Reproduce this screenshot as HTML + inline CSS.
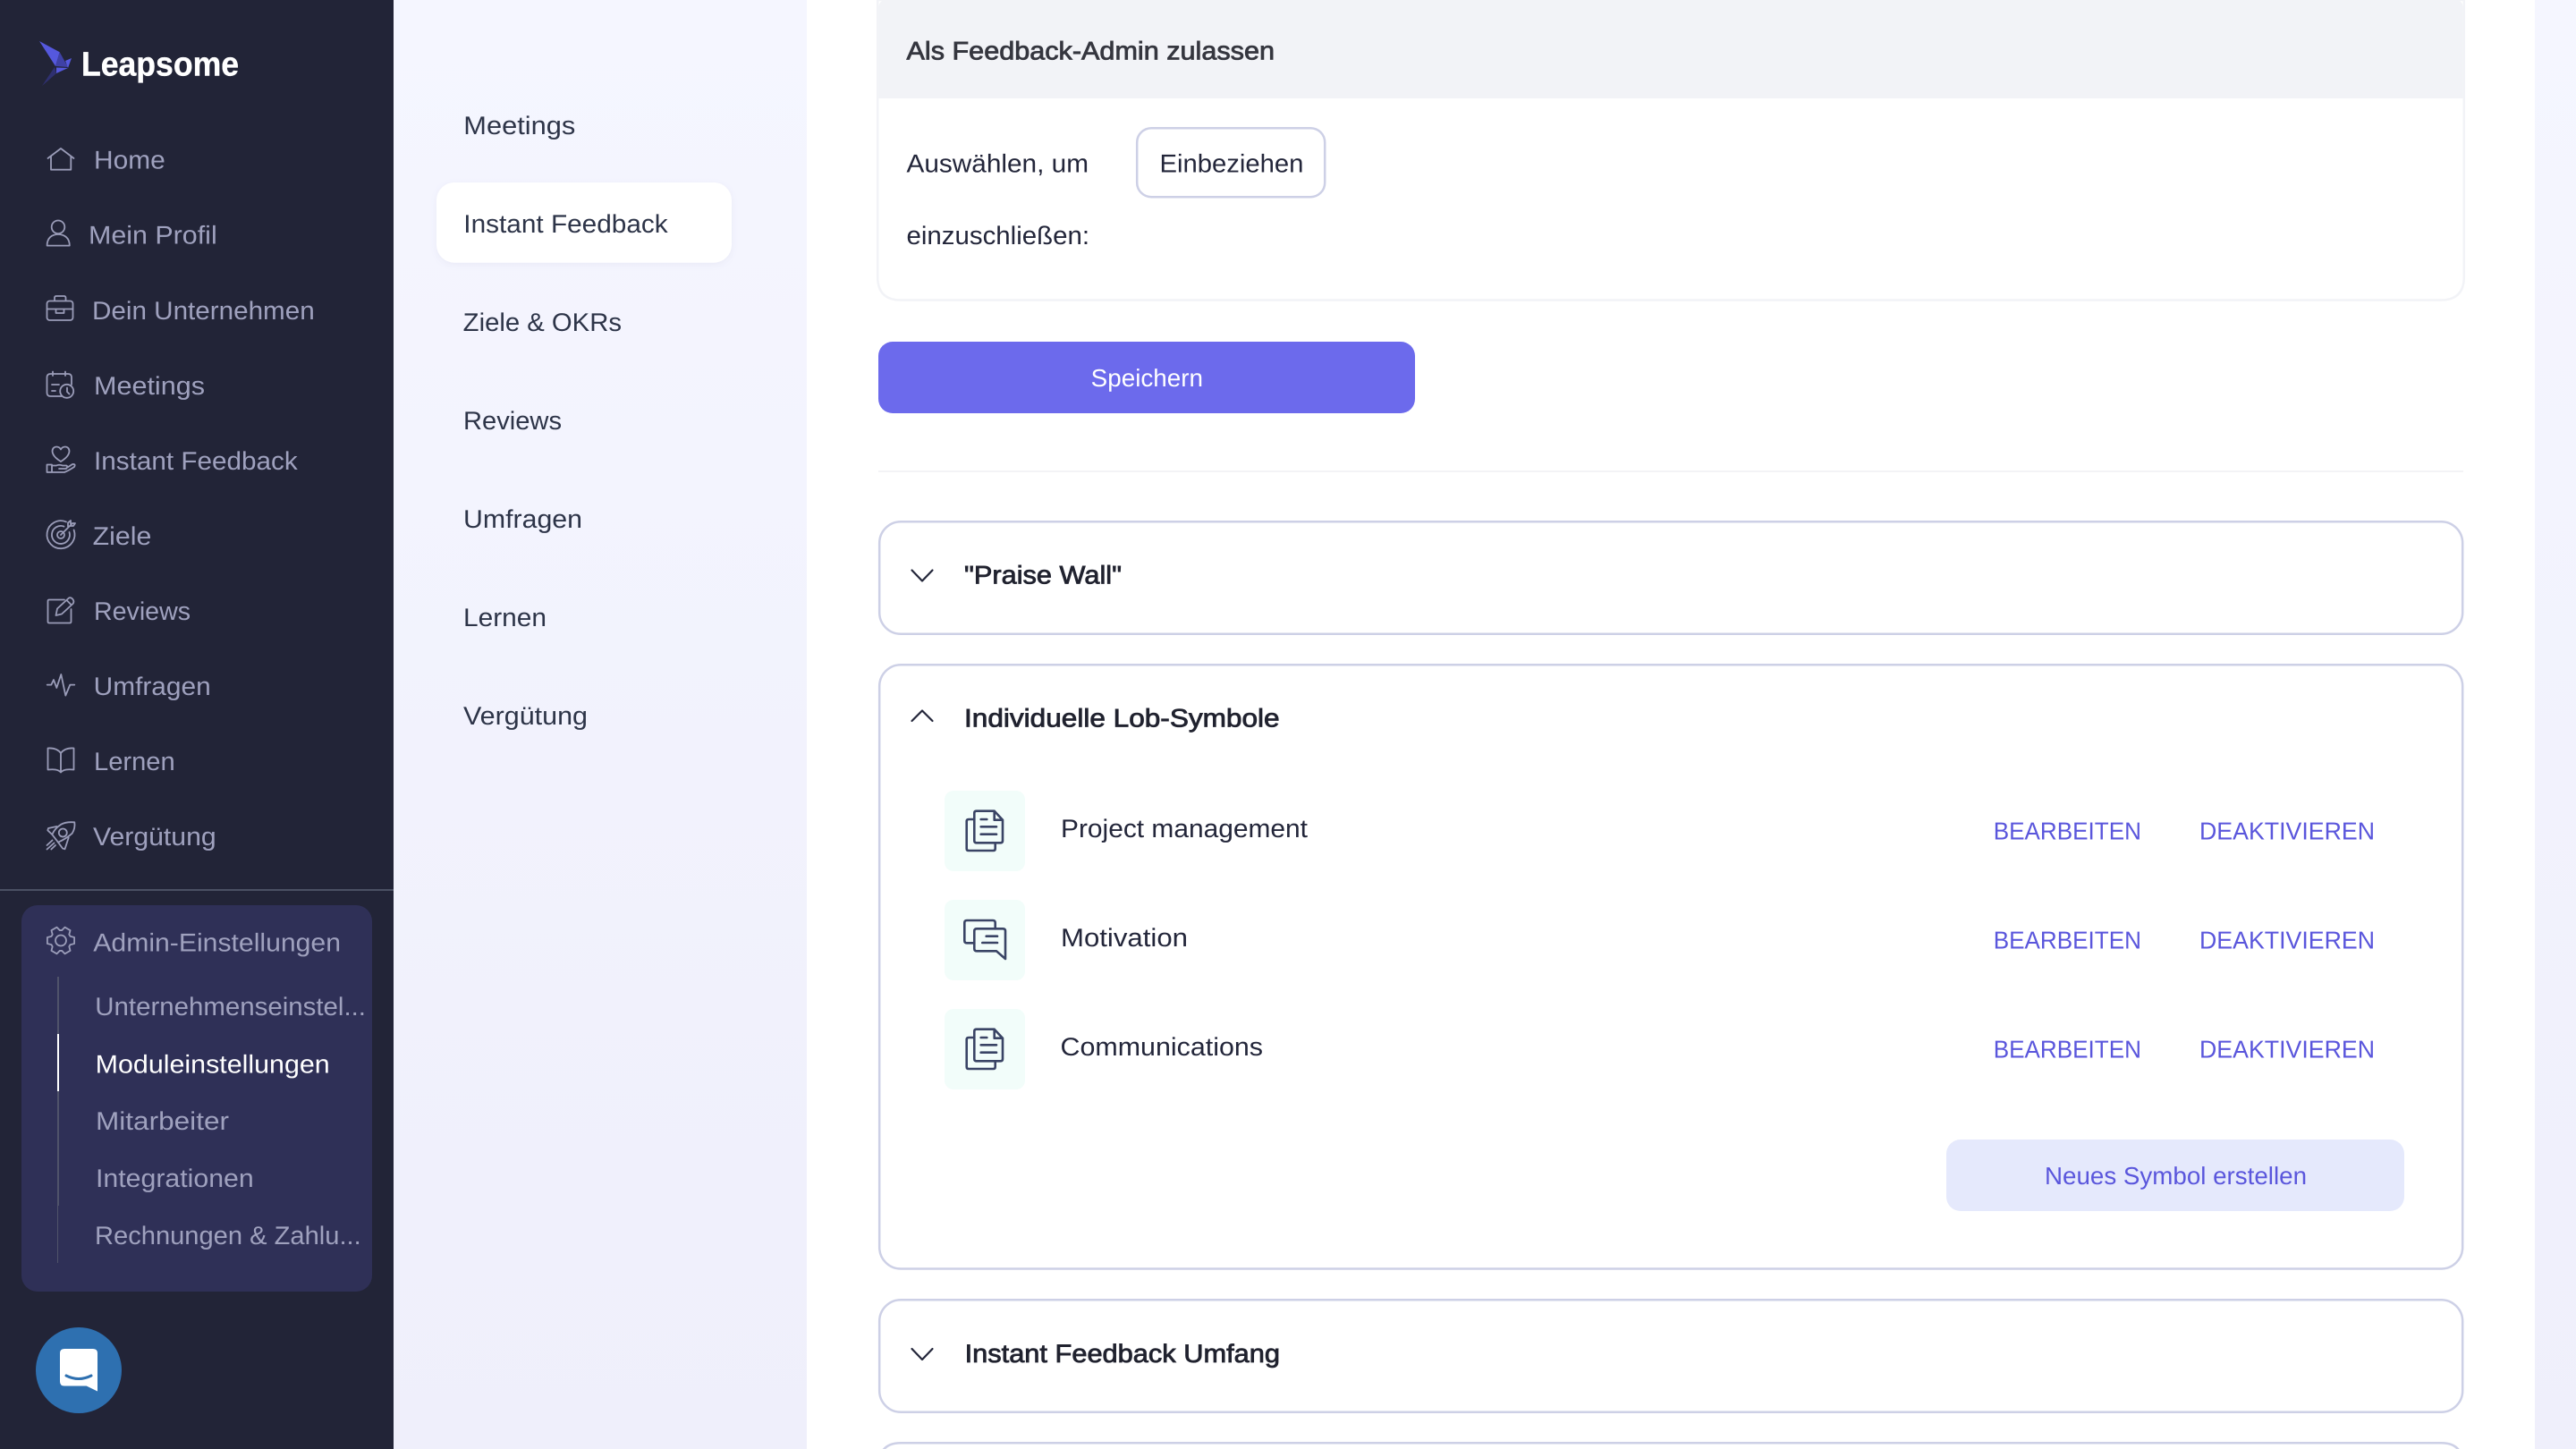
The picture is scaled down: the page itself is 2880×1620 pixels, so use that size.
<!DOCTYPE html>
<html lang="de">
<head>
<meta charset="utf-8">
<title>Leapsome</title>
<style>
html,body{margin:0;padding:0;width:2880px;height:1620px;overflow:hidden;background:#fff}
svg{display:block}
text{font-family:"Liberation Sans",Arial,sans-serif;text-rendering:geometricPrecision;transform:translateX(-1px)}
.n{font-size:28.5px;fill:#9fa1be}
.s{font-size:28.5px;fill:#2d3448}
.t{font-size:28.5px;fill:#20222f;stroke:#20222f;stroke-width:.8px}
.b{font-size:28.5px;fill:#23263a}
.a{font-size:27.5px;fill:#5a56dc}
.i{fill:none;stroke:#9a9cb8;stroke-width:1.8;stroke-linecap:round;stroke-linejoin:round}
.d{fill:none;stroke:#3a4465;stroke-width:2.6;stroke-linecap:round;stroke-linejoin:round}
.c{fill:none;stroke:#23263a;stroke-width:2.2;stroke-linecap:round;stroke-linejoin:round}
</style>
</head>
<body>
<svg xmlns="http://www.w3.org/2000/svg" width="2880" height="1620" viewBox="0 0 2880 1620">
<defs>
<linearGradient id="bg" x1="0" y1="0" x2="0" y2="1">
<stop offset="0" stop-color="#f5f6ff"/>
<stop offset="1" stop-color="#efeffb"/>
</linearGradient>
</defs>

<!-- backgrounds -->
<rect x="0" y="0" width="2880" height="1620" fill="#fff"/>
<rect x="440" y="0" width="462" height="1620" fill="url(#bg)"/>
<rect x="2834" y="0" width="46" height="1620" fill="url(#bg)"/>
<rect x="0" y="0" width="440" height="1620" fill="#222437"/>

<!-- logo -->
<polygon points="44,46 66.7,58.3 62,74" fill="#5558dd"/>
<polygon points="66.7,58.3 76,75 62,74" fill="#3f41a6"/>
<polygon points="73,68 80,65 76,76" fill="#5558dd"/>
<polygon points="63,75.5 76,76 63,82" fill="#5558dd"/>
<polygon points="61,75 63,82 47,96" fill="#2f3070"/>
<text x="92" y="84.3" font-size="38" font-weight="700" fill="#fff" stroke="#fff" stroke-width=".4" textLength="176" lengthAdjust="spacingAndGlyphs">Leapsome</text>

<!-- sidebar nav -->
<text class="n" x="106" y="188.7" textLength="79.7" lengthAdjust="spacingAndGlyphs">Home</text>
<text class="n" x="100" y="272.7" textLength="143.7" lengthAdjust="spacingAndGlyphs">Mein Profil</text>
<text class="n" x="104" y="356.8" textLength="248.7" lengthAdjust="spacingAndGlyphs">Dein Unternehmen</text>
<text class="n" x="106" y="440.8" textLength="124" lengthAdjust="spacingAndGlyphs">Meetings</text>
<text class="n" x="106" y="524.8" textLength="227.7" lengthAdjust="spacingAndGlyphs">Instant Feedback</text>
<text class="n" x="104.7" y="608.9" textLength="65.6" lengthAdjust="spacingAndGlyphs">Ziele</text>
<text class="n" x="106" y="692.9" textLength="108" lengthAdjust="spacingAndGlyphs">Reviews</text>
<text class="n" x="105.7" y="777" textLength="131" lengthAdjust="spacingAndGlyphs">Umfragen</text>
<text class="n" x="106" y="861" textLength="90.7" lengthAdjust="spacingAndGlyphs">Lernen</text>
<text class="n" x="105" y="945" textLength="137.7" lengthAdjust="spacingAndGlyphs">Vergütung</text>

<!-- sidebar icons -->
<g class="i">
<path d="M53.5,177 L68,166 L82.5,177 M57,175 V189.7 H79.3 V175"/>
<circle cx="65" cy="253.8" r="7.3"/>
<path d="M52.6,274.6 C52.6,266 58,262 65,262 C72,262 77.8,266 77.8,274.6 Z"/>
<rect x="52.5" y="336.5" width="29" height="21.5" rx="3"/>
<path d="M61,336 V333 Q61,331 63,331 H71.5 Q73.5,331 73.5,333 V336 M52.5,345.5 H62.5 M71.5,345.5 H81.5 M62.5,345.5 H71.5 V350 H62.5 Z"/>
<path d="M69,443 H56.5 Q52.5,443 52.5,439 V422 Q52.5,418 56.5,418 H76 Q80,418 80,422 V430 M59,415.5 V420 M73,415.5 V420 M58,430 H66 M58,437 H62"/>
<circle cx="74.7" cy="437.3" r="7.5"/>
<path d="M75,433.5 V438 L77.5,440.5"/>
<path d="M68,516 C60,511 58.5,507 58.5,504.5 C58.5,501 61,499.5 63,499.5 C65.5,499.5 67,500.5 68,502.5 C69,500.5 70.5,499.5 73,499.5 C75,499.5 77.5,501 77.5,504.5 C77.5,507 76,511 68,516 Z"/>
<path d="M52.5,519.5 H58 V528 H52.5 Z M58,520.5 H63 Q66,519 70,520.5 H74 Q76.5,521.5 74,524 H66 M74,523.5 L81,519 Q85,518.5 83,522 Q77,526 72,528 H58"/>
<path d="M74,583.4 A15.5,15.5 0 1 0 82.6,592.5"/>
<path d="M71.5,588.6 A10,10 0 1 0 77.5,595"/>
<circle cx="68" cy="598" r="4"/>
<path d="M68,598 L81,585 M76,588.5 V584.5 L79,582 V585.5 M78.5,588 H82 L84,585 H81"/>
<path d="M72,670.5 H55 Q53.5,670.5 53.5,672 V695 Q53.5,696.5 55,696.5 H78 Q79.5,696.5 79.5,695 V681"/>
<path d="M62.5,688 L64,680.5 L77,668.5 Q79,667.5 81,669.5 L82,671 Q83,673 81.5,675 L69,686.5 Z M74.5,671 L79.5,676"/>
<path d="M52.7,765.6 H57.3 L60,760 L63.3,769 L68.3,754 L73.3,777.6 L78.3,765.6 H83.3"/>
<path d="M68,842 C65,838 60,836 53.5,836.5 V860.5 C60,860 65,860 68,863.5 C71,860 76,860 82.5,860.5 V836.5 C76,836 71,838 68,842 V863.5"/>
<path d="M83.3,919.3 C76,918.8 72,919.5 68.3,921.7 C63,925 60,929 58.3,933 L65,941.7 C71,939 76,936 80.7,931.7 C83,928 84,924 83.3,919.3 Z"/>
<path d="M63.3,924 L54,926 L53.3,928.3 L58.3,933 M76.7,936.5 L72.5,949.3 L70,948.5 L65,941.7"/>
<circle cx="70.3" cy="931" r="4.5"/>
<path d="M52.5,945 L58.5,939.5 M52.5,949.5 L60.5,942.5 M57.3,949.5 L62,945"/>
</g>

<!-- sidebar divider and admin panel -->
<rect x="0" y="994" width="440" height="2" fill="#4b5063"/>
<rect x="24" y="1012" width="392" height="432" rx="18" fill="#2f3057"/>
<g class="i" transform="translate(68,1051.5)"><path d="M10.5,-4.7 L15.1,-3.5 L15.1,3.5 L10.5,4.7 L9.3,6.76 L10.57,11.34 L4.53,14.82 L1.2,11.44 L-1.2,11.44 L-4.53,14.82 L-10.57,11.34 L-9.3,6.76 L-10.5,4.68 L-15.1,3.49 L-15.1,-3.49 L-10.5,-4.68 L-9.3,-6.76 L-10.57,-11.34 L-4.53,-14.82 L-1.2,-11.44 L1.2,-11.44 L4.53,-14.82 L10.57,-11.34 L9.3,-6.76 Z"/><circle cx="0" cy="0" r="6"/></g>
<text class="n" x="105.3" y="1063.7" textLength="276.7" lengthAdjust="spacingAndGlyphs">Admin-Einstellungen</text>
<text class="n" x="107.3" y="1135" textLength="302.7" lengthAdjust="spacingAndGlyphs">Unternehmenseinstel...</text>
<text x="107.7" y="1199.6" font-size="28.5" fill="#fff" textLength="262" lengthAdjust="spacingAndGlyphs">Moduleinstellungen</text>
<text class="n" x="108" y="1263" textLength="149" lengthAdjust="spacingAndGlyphs">Mitarbeiter</text>
<text class="n" x="108" y="1327" textLength="176.7" lengthAdjust="spacingAndGlyphs">Integrationen</text>
<text class="n" x="107" y="1391" textLength="297.7" lengthAdjust="spacingAndGlyphs">Rechnungen &amp; Zahlu...</text>
<rect x="64" y="1092" width="2" height="64" fill="#50536a"/>
<rect x="64" y="1156" width="2" height="64" fill="#fff"/>
<rect x="64" y="1220" width="2" height="128" fill="#50536a"/>
<rect x="64" y="1348" width="1" height="64" fill="#50536a"/>

<!-- chat bubble -->
<circle cx="88" cy="1532" r="48" fill="#2e70b0"/>
<path d="M72,1508 H104 Q109,1508 109,1513 V1555.5 L96.7,1549.5 H72 Q67,1549.5 67,1544.5 V1513 Q67,1508 72,1508 Z" fill="#fff"/>
<path d="M74,1538 Q88,1545 102,1538" fill="none" stroke="#2e70b0" stroke-width="3" stroke-linecap="round"/>

<!-- sub nav -->
<text class="s" x="519.3" y="150" textLength="125" lengthAdjust="spacingAndGlyphs">Meetings</text>
<rect x="488" y="204" width="330" height="89.7" rx="20" fill="#fff" style="filter:drop-shadow(0 2px 4px rgba(40,40,100,.05))"/>
<text class="s" x="519.3" y="260" textLength="228.4" lengthAdjust="spacingAndGlyphs">Instant Feedback</text>
<text class="s" x="518.7" y="370" textLength="177.3" lengthAdjust="spacingAndGlyphs">Ziele &amp; OKRs</text>
<text class="s" x="519" y="480" textLength="110" lengthAdjust="spacingAndGlyphs">Reviews</text>
<text class="s" x="519" y="590" textLength="133" lengthAdjust="spacingAndGlyphs">Umfragen</text>
<text class="s" x="519" y="700" textLength="93" lengthAdjust="spacingAndGlyphs">Lernen</text>
<text class="s" x="519" y="810" textLength="139" lengthAdjust="spacingAndGlyphs">Vergütung</text>

<!-- card: Als Feedback-Admin -->
<path d="M981.2,0 V309.5 Q981.2,335.5 1007.2,335.5 H2728.8 Q2754.8,335.5 2754.8,309.5 V0 Z" fill="#fff" stroke="#f2f3f7" stroke-width="2.5"/>
<path d="M982.5,110 V8 Q982.5,0 992,0 H2744 Q2753.5,0 2753.5,8 V110 Z" fill="#f2f3f7"/>
<text class="t" x="1014.5" y="66.7" style="fill:#35363f;stroke:#35363f" textLength="411.5" lengthAdjust="spacingAndGlyphs">Als Feedback-Admin zulassen</text>
<text class="b" x="1014.5" y="192.7" textLength="203.5" lengthAdjust="spacingAndGlyphs">Auswählen, um</text>
<text class="b" x="1014.5" y="273" textLength="204.5" lengthAdjust="spacingAndGlyphs">einzuschließen:</text>
<rect x="1271.2" y="143.2" width="210" height="77" rx="16" fill="#fff" stroke="#cdd0e6" stroke-width="2.5"/>
<text class="b" x="1297.5" y="192.7" textLength="160.9" lengthAdjust="spacingAndGlyphs">Einbeziehen</text>

<!-- save -->
<rect x="982" y="382" width="600" height="80" rx="16" fill="#6c6aec"/>
<text x="1220.7" y="432" font-size="27.5" fill="#fff" textLength="125.3" lengthAdjust="spacingAndGlyphs">Speichern</text>
<rect x="982" y="526" width="1772" height="2" fill="#f3f3f6"/>

<!-- card: Praise Wall -->
<rect x="983.2" y="583.2" width="1770" height="125.6" rx="24" fill="#fff" stroke="#cdd0e6" stroke-width="2.5"/>
<path class="c" d="M1019.5,637.5 L1031,649.5 L1042.5,637.5"/>
<text class="t" x="1079" y="652.7" textLength="176" lengthAdjust="spacingAndGlyphs">"Praise Wall"</text>

<!-- card: Individuelle Lob-Symbole -->
<rect x="983.2" y="743.2" width="1770" height="675.3" rx="24" fill="#fff" stroke="#cdd0e6" stroke-width="2.5"/>
<path class="c" d="M1019.5,806 L1031,794.5 L1042.5,806"/>
<text class="t" x="1079" y="812.7" textLength="352.6" lengthAdjust="spacingAndGlyphs">Individuelle Lob-Symbole</text>

<rect x="1056" y="884" width="90" height="90" rx="10" fill="#f2fdfa"/>
<rect x="1056" y="1006" width="90" height="90" rx="10" fill="#f2fdfa"/>
<rect x="1056" y="1128" width="90" height="90" rx="10" fill="#f2fdfa"/>

<g class="d">
<path d="M1089.3,916 H1083 Q1080.7,916 1080.7,918.3 V948.7 Q1080.7,951 1083,951 H1110.4 Q1112.7,951 1112.7,948.7 V942.3"/>
<path d="M1111.7,906.7 H1091.6 Q1089.3,906.7 1089.3,909 V940 Q1089.3,942.3 1091.6,942.3 H1118.7 Q1121,942.3 1121,940 V916.7 Z M1111.7,906.7 V916.7 H1121"/>
<path d="M1096.7,916 H1103.3 M1096.7,924.3 H1114 M1096.7,932.7 H1114"/>
</g>
<g class="d" transform="translate(0,244)">
<path d="M1089.3,916 H1083 Q1080.7,916 1080.7,918.3 V948.7 Q1080.7,951 1083,951 H1110.4 Q1112.7,951 1112.7,948.7 V942.3"/>
<path d="M1111.7,906.7 H1091.6 Q1089.3,906.7 1089.3,909 V940 Q1089.3,942.3 1091.6,942.3 H1118.7 Q1121,942.3 1121,940 V916.7 Z M1111.7,906.7 V916.7 H1121"/>
<path d="M1096.7,916 H1103.3 M1096.7,924.3 H1114 M1096.7,932.7 H1114"/>
</g>
<g class="d">
<path d="M1089.3,1054.3 H1081 Q1078.3,1054.3 1078.3,1051.6 V1031.7 Q1078.3,1029 1081,1029 H1110 Q1112.7,1029 1112.7,1031.7 V1038.3"/>
<path d="M1092,1038.3 H1121.3 Q1124,1038.3 1124,1041 V1072 L1114,1063.3 H1092 Q1089.3,1063.3 1089.3,1060.6 V1041 Q1089.3,1038.3 1092,1038.3 Z"/>
<path d="M1102.7,1046.7 H1115 M1098.3,1054 H1115"/>
</g>

<text class="b" x="1187" y="936" textLength="276" lengthAdjust="spacingAndGlyphs">Project management</text>
<text class="b" x="1187" y="1058" textLength="142" lengthAdjust="spacingAndGlyphs">Motivation</text>
<text class="b" x="1186.5" y="1180" textLength="226.5" lengthAdjust="spacingAndGlyphs">Communications</text>

<text class="a" x="2229.7" y="938.5" textLength="165.3" lengthAdjust="spacingAndGlyphs">BEARBEITEN</text>
<text class="a" x="2460" y="938.5" textLength="196" lengthAdjust="spacingAndGlyphs">DEAKTIVIEREN</text>
<text class="a" x="2229.7" y="1060.5" textLength="165.3" lengthAdjust="spacingAndGlyphs">BEARBEITEN</text>
<text class="a" x="2460" y="1060.5" textLength="196" lengthAdjust="spacingAndGlyphs">DEAKTIVIEREN</text>
<text class="a" x="2229.7" y="1182.5" textLength="165.3" lengthAdjust="spacingAndGlyphs">BEARBEITEN</text>
<text class="a" x="2460" y="1182.5" textLength="196" lengthAdjust="spacingAndGlyphs">DEAKTIVIEREN</text>

<rect x="2176" y="1274" width="512" height="80" rx="16" fill="#e5e9fc"/>
<text class="a" x="2287" y="1324" textLength="293" lengthAdjust="spacingAndGlyphs">Neues Symbol erstellen</text>

<!-- card: Instant Feedback Umfang -->
<rect x="983.2" y="1453.2" width="1770" height="125.6" rx="24" fill="#fff" stroke="#cdd0e6" stroke-width="2.5"/>
<path class="c" d="M1019.5,1508 L1031,1520 L1042.5,1508"/>
<text class="t" x="1079.6" y="1523" textLength="352.4" lengthAdjust="spacingAndGlyphs">Instant Feedback Umfang</text>

<!-- next card (top edge only, cut by the viewport) -->
<path d="M983.2,1620 V1637 Q983.2,1613.2 1007.2,1613.2 H2729.2 Q2753.2,1613.2 2753.2,1637 V1620" fill="none" stroke="#cdd0e6" stroke-width="2.5"/>
</svg>
</body>
</html>
